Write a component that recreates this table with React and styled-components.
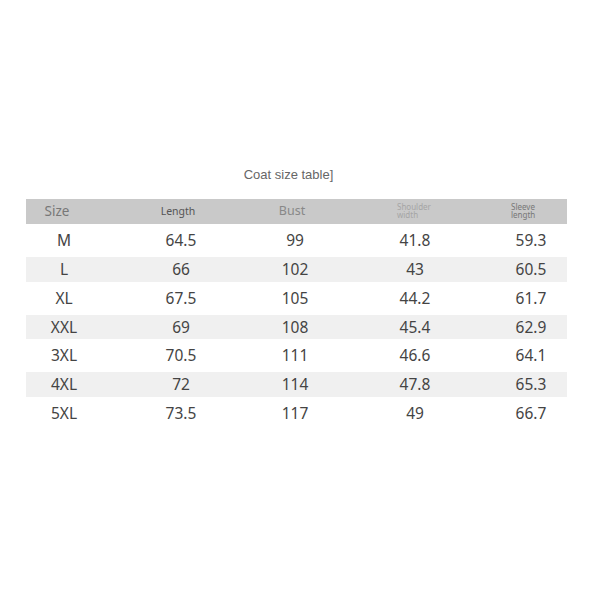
import React from "react";
import styled, { createGlobalStyle } from "styled-components";

const Global = createGlobalStyle`
  html, body { margin: 0; padding: 0; background: #fff; }
  body { width: 600px; height: 600px; font-family: "Noto Sans", sans-serif; }
`;

const Page = styled.div`
  width: 600px;
  height: 600px;
  box-sizing: border-box;
  padding: 165px 33px 0 26px;
  display: flex;
  flex-direction: column;
`;

const Title = styled.div`
  font-family: "Liberation Sans", Arial, sans-serif;
  font-size: 13px;
  color: #666;
  text-align: center;
  height: 20px;
  line-height: 20px;
  padding-right: 16px;
  margin-bottom: 14px;
`;

const HeadRow = styled.div`
  display: grid;
  grid-template-columns: 62px 180px 48px 192px 32px 1fr;
  height: 25px;
  align-items: center;
  background: #c9c9c9;
`;

const HeadCell = styled.div`
  justify-self: ${(p) => (p.$left ? "start" : "center")};
  padding-left: ${(p) => p.$pad || 0}px;
  font-size: ${(p) => p.$size}px;
  color: ${(p) => p.$color};
  line-height: ${(p) => (p.$tight ? "8px" : "1")};
  white-space: ${(p) => (p.$tight ? "normal" : "nowrap")};
  width: ${(p) => (p.$tight ? "40px" : "auto")};
  margin-top: ${(p) => (p.$tight ? "-1px" : "0")};
`;

const Row = styled.div`
  display: grid;
  grid-template-columns: 76px 158px 70px 170px 62px 1fr;
  height: ${(p) => (p.$shade ? 24.5 : 33)}px;
  align-items: center;
  background: ${(p) => (p.$shade ? "#f0f0f0" : "transparent")};
`;

const Cell = styled.div`
  justify-self: center;
  font-size: 15.5px;
  color: #444;
  line-height: 1;
  margin-top: 1px;
`;

const rows = [
  ["M", "64.5", "99", "41.8", "59.3"],
  ["L", "66", "102", "43", "60.5"],
  ["XL", "67.5", "105", "44.2", "61.7"],
  ["XXL", "69", "108", "45.4", "62.9"],
  ["3XL", "70.5", "111", "46.6", "64.1"],
  ["4XL", "72", "114", "47.8", "65.3"],
  ["5XL", "73.5", "117", "49", "66.7"],
];

export default function App() {
  return (
    <>
      <Global />
      <Page>
        <Title>Coat size table]</Title>
        <HeadRow>
          <HeadCell $size={13.5} $color="#777">Size</HeadCell>
          <HeadCell $size={10.5} $color="#555">Length</HeadCell>
          <HeadCell $size={12.5} $color="#888">Bust</HeadCell>
          <HeadCell $size={8} $color="#a5a5a5" $tight $pad={10}>
            Shoulder width
          </HeadCell>
          <HeadCell $size={8} $color="#777" $tight $left $pad={3}>
            Sleeve length
          </HeadCell>
          <div />
        </HeadRow>
        {rows.map((r, i) => (
          <Row key={r[0]} $shade={i % 2 === 1}>
            {r.map((v, j) => (
              <Cell key={j}>{v}</Cell>
            ))}
            <div />
          </Row>
        ))}
      </Page>
    </>
  );
}
